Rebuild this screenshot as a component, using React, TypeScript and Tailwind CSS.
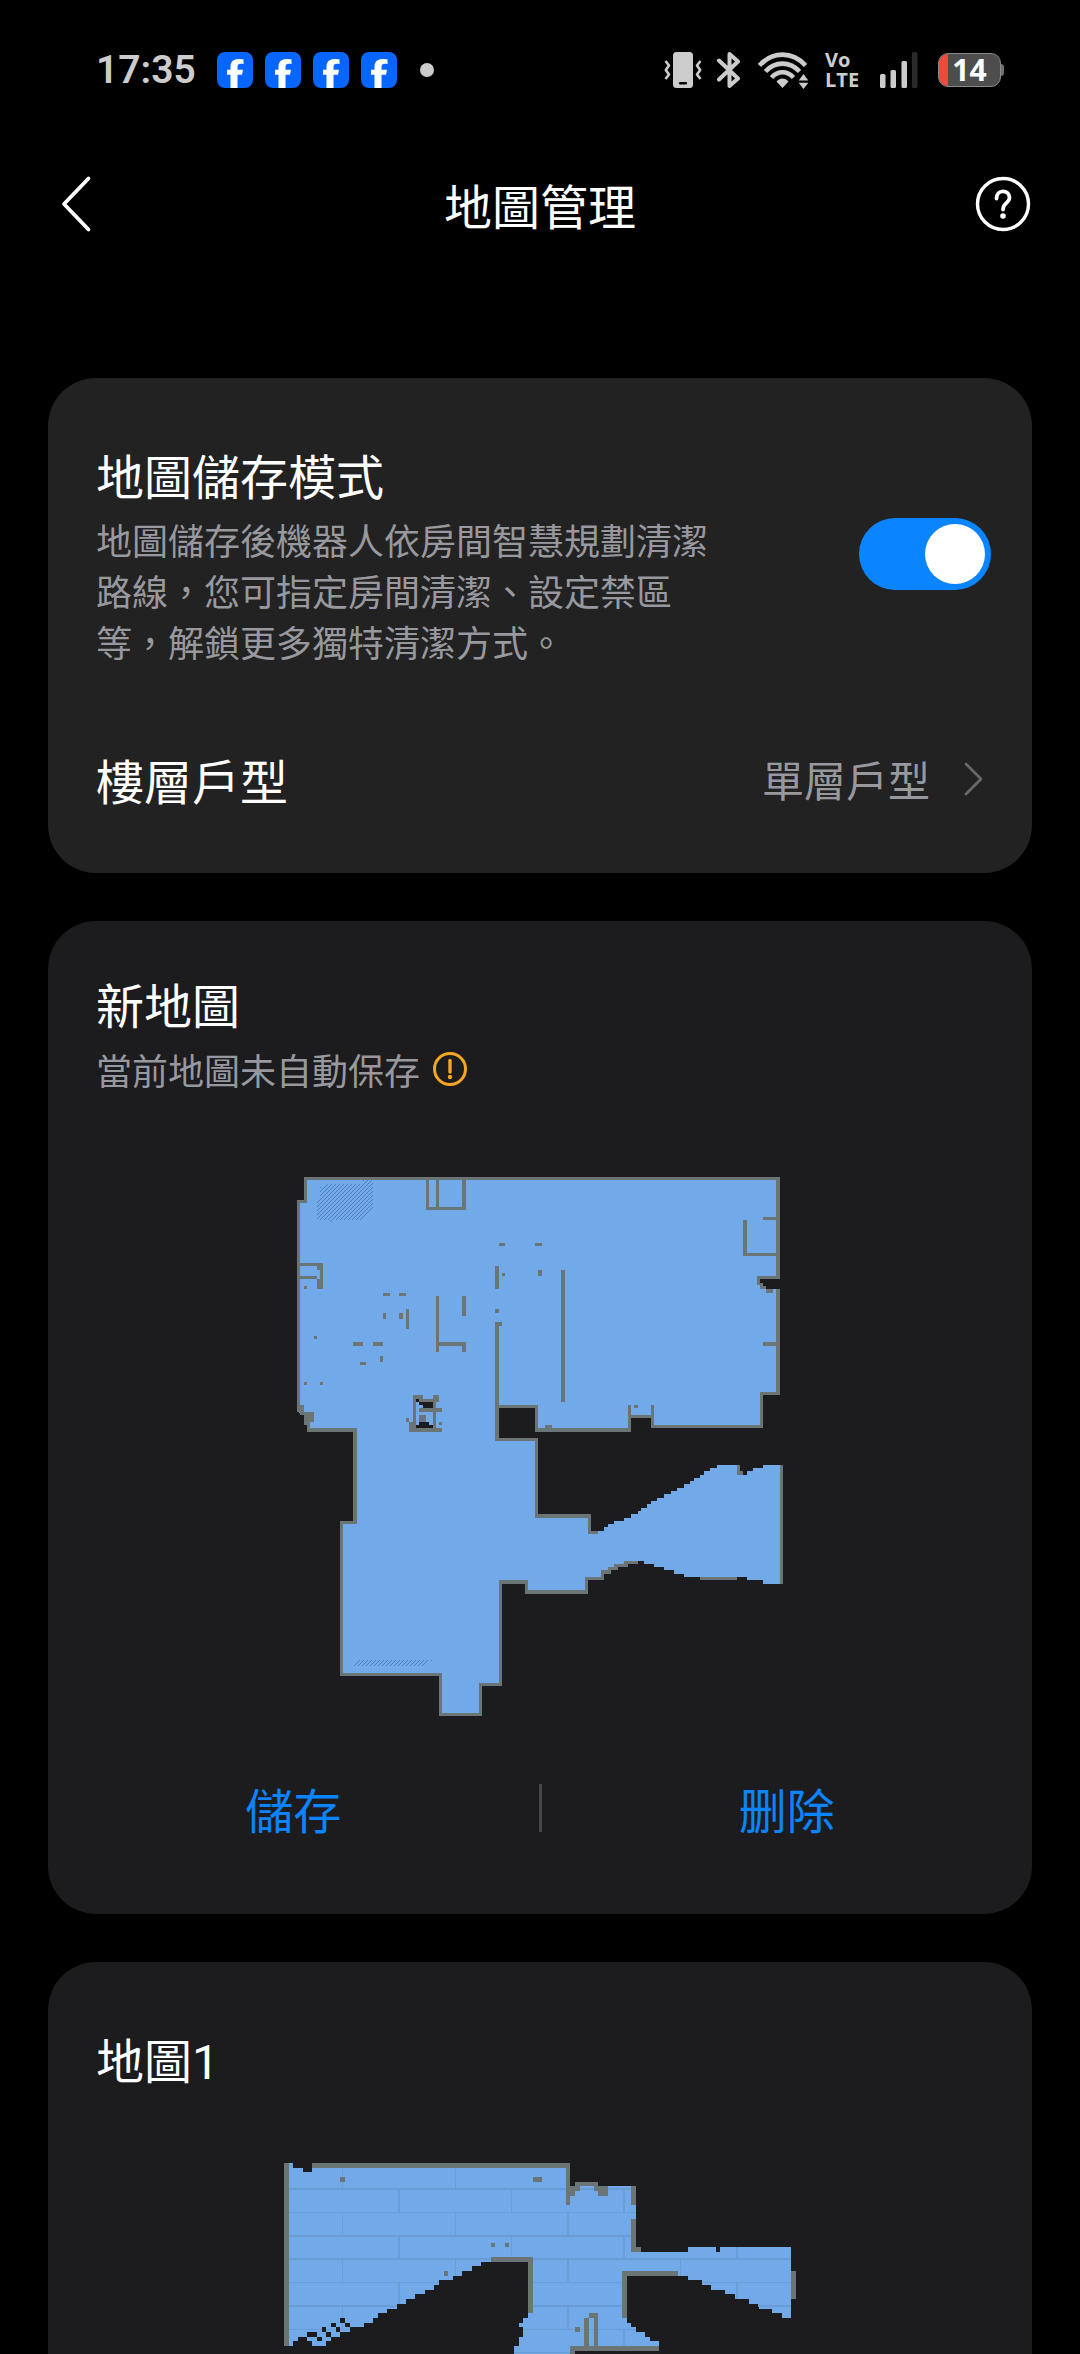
import { useState } from "react";

const WALL = "#6b7576";
const FLOOR = "#72a9e9";
const CARD = "#1c1c1e";

type Rect = [x: number, y: number, width: number, height: number];

function Rects({ items, fill }: { items: Rect[]; fill: string }) {
  return (
    <g fill={fill}>
      {items.map(([x, y, w, h]) => (
        <rect key={`${x}-${y}-${w}-${h}`} x={x} y={y} width={w} height={h} />
      ))}
    </g>
  );
}

/* ---------- status bar ---------- */

function FacebookIcon() {
  return (
    <svg viewBox="0 0 36 36" className="size-9" aria-hidden="true">
      <rect width="36" height="36" rx="8" fill="#0866ff" />
      <path
        fill="#fff"
        d="M13.500 36V22.800H10V17.800h3.500V15.500c0-5.700 2.700-8.500 8.300-8.500 1.600 0 3.500.200 4.700.500V12c-.700-.100-1.500-.200-2.500-.200-2.700 0-3.500 1-3.500 3.500v2.500h5.500l-1 5h-4.500V36z"
      />
    </svg>
  );
}

function VibrateIcon() {
  return (
    <svg viewBox="0 0 38 36" className="h-9 w-[38px]" aria-hidden="true">
      <rect x="9" width="20" height="36" rx="3.500" fill="#ccc" />
      <rect x="15" y="30" width="8" height="2.500" rx="1" fill="#000" />
      <g fill="none" stroke="#ccc" strokeWidth="2.600" strokeLinejoin="round">
        <path d="M1.500 9l3.500 4.500L1.800 18 5 22.500 1.500 27" />
        <path d="M36.500 9L33 13.500l3.200 4.500L33 22.500l3.500 4.500" />
      </g>
    </svg>
  );
}

function BluetoothIcon() {
  return (
    <svg viewBox="0 0 24 38" className="h-[38px] w-6" aria-hidden="true">
      <path
        d="M2 9.500L21 27.500 12.500 35V3L21 10.500 2 28.500"
        fill="none"
        stroke="#ccc"
        strokeWidth="4"
        strokeLinejoin="round"
        strokeLinecap="round"
      />
    </svg>
  );
}

function WifiIcon() {
  return (
    <svg viewBox="0 0 52 38" className="h-[38px] w-[52px]" aria-hidden="true">
      <g fill="none" stroke="#ccc" strokeWidth="4.600">
        <path d="M2.500 14.500C15.500 0 35.500 0 48.500 14.500" />
        <path d="M8.500 20.500C18 10 33 10 42.500 20.500" />
        <path d="M14.500 26.500C21 19.500 30 19.500 36.500 26.500" />
      </g>
      <path d="M25.500 37l-6-6.500c3.500-4 8.500-4 12 0z" fill="#ccc" />
      <path d="M46.500 23l4.800 6.500h-9.600zM46.500 38l4.800-6.200h-9.600z" fill="#ccc" />
    </svg>
  );
}

function SignalIcon() {
  return (
    <svg viewBox="0 0 38 36" className="h-9 w-[38px]" aria-hidden="true">
      <rect y="22" width="5.500" height="14" rx="1.500" fill="#ccc" />
      <rect x="10.500" y="18" width="5.500" height="18" rx="1.500" fill="#ccc" />
      <rect x="21.500" y="9" width="5.500" height="27" rx="1.500" fill="#ccc" />
      <rect x="32" width="5.500" height="36" rx="1.500" fill="#2a2a2a" />
    </svg>
  );
}

function Battery({ level }: { level: number }) {
  return (
    <div className="flex items-center">
      <div className="relative flex h-[34px] w-[63px] items-center justify-center rounded-[10px] border border-[#8a8a8a] bg-[#4d4d4d]">
        <div className="absolute inset-y-0 left-0 w-[9px] rounded-l-[9px] bg-[#ee4a3e]" />
        <span className="relative font-['Noto_Sans'] text-[30px] leading-[34px] font-bold text-white">{level}</span>
      </div>
      <div className="h-3 w-[3px] rounded-r-[3px] bg-[#707070]" />
    </div>
  );
}

function StatusBar() {
  return (
    <div className="flex h-35 shrink-0 items-center justify-between pr-19 pl-24">
      <div className="flex items-center">
        <time className="w-[121px] font-['Roboto'] text-[39px] leading-none font-semibold text-[#ccc]">17:35</time>
        <div className="flex items-center gap-3">
          <FacebookIcon />
          <FacebookIcon />
          <FacebookIcon />
          <FacebookIcon />
        </div>
        <span className="ml-[23px] size-3.5 rounded-full bg-[#ccc]" />
      </div>
      <div className="flex items-center">
        <VibrateIcon />
        <span className="ml-[15px] flex">
          <BluetoothIcon />
        </span>
        <span className="ml-4 flex">
          <WifiIcon />
        </span>
        <span className="ml-4 flex w-[33px] flex-col font-['Open_Sans'] text-[20px] leading-[20px] font-bold text-[#ccc]">
          <span>Vo</span>
          <span>LTE</span>
        </span>
        <span className="mr-5 ml-[22px] flex">
          <SignalIcon />
        </span>
        <Battery level={14} />
      </div>
    </div>
  );
}

/* ---------- navigation ---------- */

function NavBar() {
  return (
    <header className="grid h-32 shrink-0 grid-cols-[1fr_auto_1fr] items-center px-12">
      <button type="button" aria-label="返回" className="justify-self-start px-3">
        <svg viewBox="0 0 32 60" className="h-15 w-8" aria-hidden="true">
          <path d="M28.500 4.500L4 30l24.500 25.500" fill="none" stroke="#fff" strokeWidth="3.800" strokeLinecap="round" strokeLinejoin="round" />
        </svg>
      </button>
      <h1 className="text-5xl leading-[60px]">地圖管理</h1>
      <button type="button" aria-label="說明" className="justify-self-end">
        <svg viewBox="0 0 58 58" className="size-[58px]" aria-hidden="true">
          <circle cx="29" cy="29" r="25.500" fill="none" stroke="#fff" strokeWidth="3.400" />
          <path d="M22.500 23.500c0-4.500 2.800-7.200 6.500-7.200s6.500 2.700 6.500 6.400c0 5.300-6.500 5.300-6.500 11.800" fill="none" stroke="#fff" strokeWidth="3.800" strokeLinecap="round" />
          <circle cx="29" cy="41" r="2.800" fill="#fff" />
        </svg>
      </button>
    </header>
  );
}

/* ---------- settings card ---------- */

function SettingsCard() {
  const [saveMaps, setSaveMaps] = useState(true);
  return (
    <section className="rounded-[48px] bg-[#222] pr-[41px] pb-11 pl-12">
      <label className="flex items-center justify-between">
        <span className="block max-w-[630px] pt-[66px] pb-[62px]">
          <span className="block text-5xl leading-[60px]">地圖儲存模式</span>
          <span className="mt-2.5 block text-4xl leading-[51px] text-[#98989f]">
            地圖儲存後機器人依房間智慧規劃清潔路線，您可指定房間清潔、設定禁區等，解鎖更多獨特清潔方式。
          </span>
        </span>
        <input
          type="checkbox"
          role="switch"
          aria-label="地圖儲存模式"
          checked={saveMaps}
          onChange={(e) => setSaveMaps(e.target.checked)}
          className="h-18 w-33 shrink-0 appearance-none rounded-full bg-[#4a4a4c] p-1.5 before:block before:size-15 before:rounded-full before:bg-white checked:bg-[#0a84ff] checked:before:ml-auto"
        />
      </label>
      <button type="button" className="flex h-25 w-full items-center text-left">
        <span className="flex-1 text-5xl leading-[60px]">樓層戶型</span>
        <span className="text-[42px] leading-[60px] text-[#98989f]">單層戶型</span>
        <svg viewBox="0 0 24 40" className="mr-1.5 ml-[31px] h-10 w-6" aria-hidden="true">
          <path d="M5 5l15 15L5 35" fill="none" stroke="#68686b" strokeWidth="2.800" strokeLinecap="round" strokeLinejoin="round" />
        </svg>
      </button>
    </section>
  );
}

/* ---------- maps ---------- */

const newMapFloor =
  "M76 55H1494V357H1440v12h9v9h9v9H1494V700H1444V799H1117V769H1048V809H769V740H651V838H769V1067H928V1113H972V1102H984V1092H1002V1083H1032V1074H1053V1062H1074V1053H1083V1044H1101V1032H1113V1023H1131V1014H1152V1002H1173V993H1191V984H1212V972H1230V963H1242V954H1260V945H1272V933H1290V924H1311V915H1371V945H1401V933H1419V924H1449V915H1509V1272H1449V1260H1401V1251H1212V1242H1182V1230H1152V1221H1122V1212H1092V1203H1032V1212H1002V1221H984V1230H963V1251H919V1296H739V1265H661V1574H601V1664H482V1544H184V1088H225V809H86V760H56V124H76Z";

const newMapWalls =
  "M76 55H1494V352H1436V369M1494 392V700H1444V799H1117V740M1117 769H1048M1048 740V809H769V740H651M651 495V838H769V1067H928V1117H949M1504 920V1267M919 1255V1296H739V1265H661V1574H601V1664H482V1544H184V1088H225V809H86V790M56 750V124H76V55M442 60V145H552V60M472 60V145M60 313H124V380M60 352H106M382 452V502M472 413V571M1394 283H1488M1454 175H1488M919 1255H967V1235";

const thickWalls: Rect[] = [
  [1488, 51, 12, 306], [1488, 387, 12, 317], [546, 51, 12, 99], [546, 408, 12, 60],
  [546, 546, 12, 30], [468, 546, 90, 12], [645, 318, 12, 69], [645, 486, 12, 357],
  [219, 804, 12, 288], [81, 804, 150, 12], [765, 804, 288, 12], [843, 330, 12, 396],
  [1389, 180, 12, 108], [1449, 546, 51, 12], [765, 1062, 168, 12], [735, 1290, 189, 12],
  [657, 1260, 87, 12],
];

const newMapDetails: Rect[] = [
  [111, 318, 18, 12], [111, 357, 18, 30], [72, 378, 9, 9],
  [309, 399, 21, 9], [357, 399, 21, 9], [309, 459, 9, 18], [357, 459, 12, 18],
  [102, 528, 9, 9], [219, 546, 30, 12], [279, 546, 30, 12], [300, 588, 9, 18], [240, 606, 18, 9],
  [72, 666, 9, 9], [120, 666, 9, 9],
  [657, 249, 18, 9], [765, 249, 21, 9], [666, 339, 9, 9], [774, 330, 12, 18],
  [645, 447, 12, 12], [645, 486, 21, 12],
  [51, 735, 21, 21], [60, 756, 15, 9], [72, 756, 30, 30], [72, 786, 18, 9],
  [399, 705, 30, 12], [459, 705, 18, 21], [399, 705, 9, 82], [408, 717, 69, 9],
  [459, 726, 9, 80], [417, 744, 69, 12], [417, 765, 21, 21], [387, 786, 21, 30],
  [387, 804, 99, 12], [378, 774, 9, 12], [477, 786, 9, 9],
  [795, 795, 21, 9], [1062, 735, 12, 9],
  [1440, 369, 9, 18], [1449, 378, 9, 9], [1458, 387, 21, 12],
  [1371, 915, 9, 30], [1380, 933, 9, 12], [1260, 1251, 111, 9],
  [1032, 1203, 42, 9], [1002, 1212, 42, 9], [984, 1221, 30, 9], [963, 1230, 30, 12],
];

const newMapGaps: Rect[] = [
  [408, 717, 9, 9], [417, 726, 42, 9], [429, 735, 30, 9],
  [417, 786, 30, 9], [408, 795, 51, 9],
];

function NewMap() {
  return (
    <svg viewBox="30 30 1500 1650" className="w-[500px] max-w-full" role="img" aria-label="新地圖" shapeRendering="crispEdges">
      <defs>
        <pattern id="carpet" width="12" height="12" patternUnits="userSpaceOnUse">
          <path d="M0 9h3v3H0zM3 6h3v3H3zM6 3h3v3H6zM9 0h3v3H9z" fill="#4f80bb" />
        </pattern>
      </defs>
      <path d={newMapFloor} fill={FLOOR} />
      <path d="M120 82L145 72H250V60H279V145L241 180H160L150 188V180H111V120H120Z" fill="url(#carpet)" />
      <path d="M240 1500H459L441 1509 426 1518H219Z" fill="url(#carpet)" />
      <path d={newMapWalls} fill="none" stroke={WALL} strokeWidth="10" strokeLinecap="square" />
      <Rects items={thickWalls} fill={WALL} />
      <Rects items={newMapDetails} fill={WALL} />
      <Rects items={newMapGaps} fill={CARD} />
    </svg>
  );
}

const savedMapFloor =
  "M42 69H69V84H99V96H126V69H900V138H1098V336H1254V321H1338V336H1350V321H1563V534H1536V519H1506V507H1467V501H1464V492H1437V477H1395V462H1365V450H1323V435H1296V420H1254V408H1071V549H1083V561H1098V576H1125V591H1140V603H1167V633H915V642H732V618H747V591H759V561H747V549H759V534H774V366H633V378H606V393H576V408H549V420H507V435H492V450H465V462H435V477H408V492H381V507H351V519H324V534H309V549H282V561H240V576H210V591H183V603H168V618H126V603H111V591H84V603H69V618H42Z";

const savedMapWalls: Rect[] = [
  [42, 69, 15, 549], [126, 69, 774, 15], [888, 69, 12, 126],
  [915, 126, 69, 12], [900, 138, 30, 15], [900, 153, 15, 15], [972, 138, 12, 15], [984, 138, 30, 30],
  [1083, 138, 15, 57], [1083, 237, 15, 99], [1083, 321, 30, 15],
  [210, 111, 15, 15], [789, 111, 27, 15], [663, 309, 12, 12], [705, 309, 12, 12], [522, 393, 12, 15],
  [663, 351, 126, 15], [774, 351, 15, 168], [1056, 393, 168, 15], [1056, 393, 15, 141],
  [1563, 393, 15, 84], [942, 534, 15, 84], [957, 519, 27, 15], [972, 519, 12, 99],
  [915, 561, 15, 15], [900, 618, 267, 15], [900, 618, 15, 24],
];

const savedMapGaps: Rect[] = [
  [210, 534, 15, 15], [183, 549, 15, 12], [225, 549, 15, 12], [156, 561, 12, 15],
  [198, 561, 12, 15], [111, 576, 30, 15], [168, 576, 15, 15], [141, 591, 15, 12],
];

function SavedMap() {
  return (
    <svg viewBox="30 60 1560 582" className="w-[520px] max-w-full" role="img" aria-label="地圖1" shapeRendering="crispEdges">
      <defs>
        <clipPath id="saved-floor">
          <path d={savedMapFloor} />
        </clipPath>
      </defs>
      <path d={savedMapFloor} fill={FLOOR} />
      <g clipPath="url(#saved-floor)" fill="none" stroke="#6a9cd5">
        <path strokeWidth="6" d="M42 147H1580M42 288H1580M42 357H1580M42 498H1580M387 147V217M387 288V357M387 427V498M387 568V642M894 77V147M894 217V288M894 357V427M894 498V568M1062 147V217M1062 288V357M1062 427V498M1062 568V642M1401 288V357M1401 427V498" />
        <path strokeWidth="3" d="M42 76.500H69M42 217.500H1580M42 427.500H1580M42 568.500H1580M42 637.500H1580M217.500 77V147M217.500 217V288M217.500 357V427M217.500 498V568M556.500 77V147M556.500 217V288M556.500 357V427M724.500 147V217M724.500 288V357M1231.500 357V427" />
      </g>
      <Rects items={savedMapWalls} fill={WALL} />
      <Rects items={savedMapGaps} fill={CARD} />
    </svg>
  );
}

function NewMapCard() {
  return (
    <section className="rounded-[48px] bg-[#1c1c1e] pt-13 pb-[74px]">
      <div className="px-12">
        <h2 className="text-5xl leading-[60px]">新地圖</h2>
        <p className="mt-2.5 flex items-center gap-3 text-4xl leading-[52px] text-[#98989f]">
          當前地圖未自動保存
          <svg viewBox="0 0 36 36" className="size-9" aria-hidden="true">
            <circle cx="18" cy="18" r="15.500" fill="none" stroke="#f5a623" strokeWidth="3" />
            <path d="M18 9.500v11.500" stroke="#f5a623" strokeWidth="3.400" strokeLinecap="round" />
            <circle cx="18" cy="26" r="2.200" fill="#f5a623" />
          </svg>
        </p>
      </div>
      <div className="mt-[75px] flex justify-center">
        <NewMap />
      </div>
      <div className="mt-14 flex items-center text-5xl leading-[64px] text-[#0a84ff]">
        <button type="button" className="flex-1">儲存</button>
        <span className="h-12 w-[3px] bg-[#48484a]" />
        <button type="button" className="flex-1">删除</button>
      </div>
    </section>
  );
}

function SavedMapCard() {
  return (
    <section className="flex-1 rounded-t-[48px] bg-[#1c1c1e] pt-[66px]">
      <h2 className="h-15 px-12 text-5xl leading-[60px]">
        地圖<span className="font-['Roboto']">1</span>
      </h2>
      <div className="mt-18 flex justify-center">
        <SavedMap />
      </div>
    </section>
  );
}

export default function App() {
  return (
    <div lang="zh-Hant" className="flex h-screen flex-col overflow-hidden bg-black font-['Noto_Sans_CJK_TC',sans-serif] text-white">
      <StatusBar />
      <NavBar />
      <main className="mt-[110px] flex flex-1 flex-col gap-12 px-12">
        <SettingsCard />
        <NewMapCard />
        <SavedMapCard />
      </main>
    </div>
  );
}
